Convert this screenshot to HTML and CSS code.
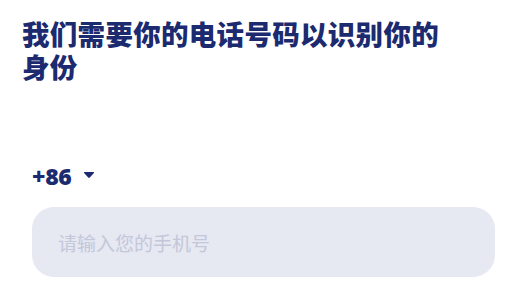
FILE: index.html
```html
<!DOCTYPE html>
<html lang="zh-CN">
<head>
  <meta charset="UTF-8" />
  <meta name="viewport" content="width=device-width, initial-scale=1.0"/>
  <title>手机号登录</title>
  <link rel="stylesheet" href="styles.css">
</head>
<body>
  <div class="page">
    <h1 class="title">我们需要你的电话号码以识别你的<br>身份</h1>

    <!-- Country code -->
    <div class="code-select">
      <span class="code">+86</span>
      <svg class="caret" width="12" height="8" viewBox="0 0 12 8">
        <path d="M1.5 1 H10.5 Q11.6 1 10.9 1.9 L6.8 6.6 Q6 7.4 5.2 6.6 L1.1 1.9 Q0.4 1 1.5 1 Z" fill="#1c2a70"/>
      </svg>
    </div>

    <input class="phone-input" type="tel" placeholder="请输入您的手机号" />
  </div>
</body>
</html>
```

FILE: styles.css
```css
* {
  box-sizing: border-box;
}

body {
  margin: 0;
  background: #ffffff;
  font-family: "Noto Sans CJK SC", "Noto Sans", sans-serif;
}

.page {
  width: 524px;
  height: 289px;
  padding: 17px 29px 0 32px;
}

.title {
  margin: 0 0 0 -10px;
  font-size: 27.5px;
  line-height: 33px;
  font-weight: 900;
  color: #1c2a70;
  letter-spacing: 0.3px;
}

.code-select {
  display: flex;
  align-items: center;
  gap: 11px;
  margin-top: 80px;
  height: 26px;
}

.code {
  font-family: "Open Sans", sans-serif;
  font-size: 23px;
  font-weight: 800;
  color: #1c2a70;
  line-height: 26px;
  letter-spacing: -0.3px;
}

.caret {
  display: block;
  margin-top: -3px;
}

.phone-input {
  display: block;
  width: 100%;
  height: 70px;
  margin-top: 18px;
  padding: 0 26px;
  border: none;
  border-radius: 22px;
  background: #e6e8f2;
  font-family: inherit;
  font-size: 19px;
  color: #1c2a70;
  outline: none;
}

.phone-input::placeholder {
  color: #c3c7da;
}
```
